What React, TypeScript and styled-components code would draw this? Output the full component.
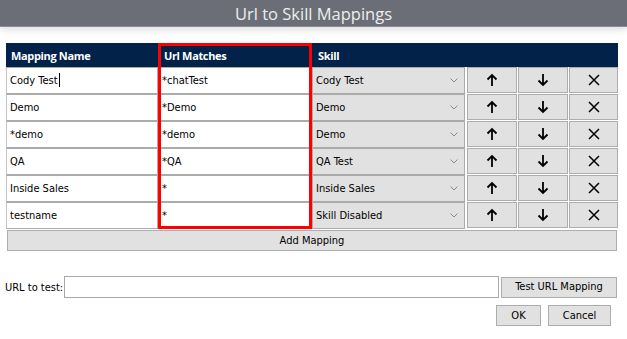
import { Fragment } from "react";
import styled, { createGlobalStyle, css } from "styled-components";

const GlobalStyle = createGlobalStyle`
  html, body {
    margin: 0;
    padding: 0;
    background: #ffffff;
  }
  body {
    font-family: "DejaVu Sans Condensed", "DejaVu Sans", sans-serif;
    font-size: 11px;
    color: #000;
  }
`;

type Place = { $row: number; $col: number };

const placed = css<Place>`
  grid-row: ${(p) => p.$row};
  grid-column: ${(p) => p.$col};
`;

const TitleBar = styled.header`
  height: 26px;
  background: #6b6e76;
  border-bottom: 1px solid #8a8d93;
  box-shadow: 0 3px 7px rgba(0, 0, 0, 0.13);
  display: flex;
  align-items: center;
  justify-content: center;
  font-family: "Open Sans", sans-serif;
  font-size: 16.5px;
  color: #eeeeee;
`;

const Body = styled.main`
  padding: 16px 10px 0 6px;
`;

const MappingGrid = styled.div`
  display: grid;
  grid-template-columns: 152px 154px 154px 51px 51px 50px;
  grid-template-rows: 24px repeat(6, 27px);
`;

const HeaderBand = styled.div`
  grid-column: 1 / -1;
  grid-row: 1;
  background: #022249;
`;

const HeaderLabel = styled.div<Place>`
  ${placed};
  display: flex;
  align-items: center;
  padding-left: ${(p) => (p.$col === 1 ? 5 : 6)}px;
  font-family: "Open Sans", sans-serif;
  font-weight: 700;
  font-size: 11px;
  letter-spacing: -0.35px;
  color: #ffffff;
`;

const Highlight = styled.div`
  grid-column: 2;
  grid-row: 1 / 8;
  border: 3px solid #ff0000;
  pointer-events: none;
  z-index: 2;
`;

const TextCell = styled.div<Place>`
  ${placed};
  box-sizing: border-box;
  height: 27px;
  border: 1px solid #ababab;
  border-left-color: #c4c4c4;
  background: #ffffff;
  display: flex;
  align-items: center;
  padding-left: 3px;
  padding-bottom: 1px;
  white-space: nowrap;
`;

const Caret = styled.span`
  display: inline-block;
  width: 1px;
  height: 14px;
  background: #000;
  margin-left: 1px;
`;

const SelectCell = styled.div<Place>`
  ${placed};
  box-sizing: border-box;
  height: 27px;
  margin-right: 1px;
  border: 1px solid #ababab;
  background: #e1e1e1;
  display: flex;
  align-items: center;
  justify-content: space-between;
  padding: 0 6px 1px 3px;
  white-space: nowrap;
`;

const RowButton = styled.button<Place>`
  ${placed};
  box-sizing: border-box;
  height: 26px;
  margin: 0 0 1px 1px;
  border: 1px solid #adadad;
  background: #e1e1e1;
  display: flex;
  align-items: center;
  justify-content: center;
  padding: 0;
`;

const WideButton = styled.button`
  display: block;
  box-sizing: border-box;
  width: 610px;
  height: 21px;
  margin: 1px 0 0 1px;
  border: 1px solid #adadad;
  background: #e1e1e1;
  font-family: inherit;
  font-size: 11px;
  color: #000;
  padding: 0 0 1px;
`;

const TestRow = styled.div`
  display: flex;
  align-items: center;
  gap: 2px;
  margin: 25px 0 0 -1px;
`;

const Label = styled.label`
  margin-right: -1px;
`;

const UrlInput = styled.input`
  box-sizing: border-box;
  width: 435px;
  height: 22px;
  border: 1px solid #a9a9a9;
  background: #fff;
  margin: 0;
`;

const Button = styled.button<{ $w: number }>`
  box-sizing: border-box;
  width: ${(p) => p.$w}px;
  height: 21px;
  border: 1px solid #adadad;
  background: #e1e1e1;
  font-family: inherit;
  font-size: 11px;
  color: #000;
  padding: 0 0 1px;
`;

const Actions = styled.div`
  display: flex;
  justify-content: flex-end;
  gap: 7px;
  margin: 7px 6px 0 0;
`;

const Chevron = () => (
  <svg width="8" height="5" viewBox="0 0 8 5">
    <polyline points="0.5,0.5 4,4 7.5,0.5" fill="none" stroke="#8a8a8a" strokeWidth="1" />
  </svg>
);

const UpIcon = () => (
  <svg width="12" height="14" viewBox="0 0 12 14">
    <path d="M6 13V2M1.5 6.5L6 2l4.5 4.5" fill="none" stroke="#000" strokeWidth="1.8" />
  </svg>
);

const DownIcon = () => (
  <svg width="12" height="14" viewBox="0 0 12 14">
    <path d="M6 1v11M1.5 7.5L6 12l4.5-4.5" fill="none" stroke="#000" strokeWidth="1.8" />
  </svg>
);

const CloseIcon = () => (
  <svg width="12" height="12" viewBox="0 0 12 12">
    <path d="M1 1l10 10M11 1L1 11" fill="none" stroke="#000" strokeWidth="1.5" />
  </svg>
);

const rows = [
  { name: "Cody Test", url: "*chatTest", skill: "Cody Test", caret: true },
  { name: "Demo", url: "*Demo", skill: "Demo" },
  { name: "*demo", url: "*demo", skill: "Demo" },
  { name: "QA", url: "*QA", skill: "QA Test" },
  { name: "Inside Sales", url: "*", skill: "Inside Sales" },
  { name: "testname", url: "*", skill: "Skill Disabled" },
];

export default function App() {
  return (
    <>
      <GlobalStyle />
      <TitleBar>Url to Skill Mappings</TitleBar>
      <Body>
        <MappingGrid>
          <HeaderBand />
          <HeaderLabel $row={1} $col={1}>Mapping Name</HeaderLabel>
          <HeaderLabel $row={1} $col={2}>Url Matches</HeaderLabel>
          <HeaderLabel $row={1} $col={3}>Skill</HeaderLabel>
          {rows.map((r, i) => {
            const row = i + 2;
            return (
              <Fragment key={i}>
                <TextCell $row={row} $col={1}>
                  {r.name}
                  {r.caret && <Caret />}
                </TextCell>
                <TextCell $row={row} $col={2}>{r.url}</TextCell>
                <SelectCell $row={row} $col={3}>
                  {r.skill}
                  <Chevron />
                </SelectCell>
                <RowButton $row={row} $col={4} aria-label="Move up">
                  <UpIcon />
                </RowButton>
                <RowButton $row={row} $col={5} aria-label="Move down">
                  <DownIcon />
                </RowButton>
                <RowButton $row={row} $col={6} aria-label="Remove">
                  <CloseIcon />
                </RowButton>
              </Fragment>
            );
          })}
          <Highlight />
        </MappingGrid>
        <WideButton>Add Mapping</WideButton>
        <TestRow>
          <Label>URL to test:</Label>
          <UrlInput />
          <Button $w={116}>Test URL Mapping</Button>
        </TestRow>
        <Actions>
          <Button $w={45}>OK</Button>
          <Button $w={63}>Cancel</Button>
        </Actions>
      </Body>
    </>
  );
}
